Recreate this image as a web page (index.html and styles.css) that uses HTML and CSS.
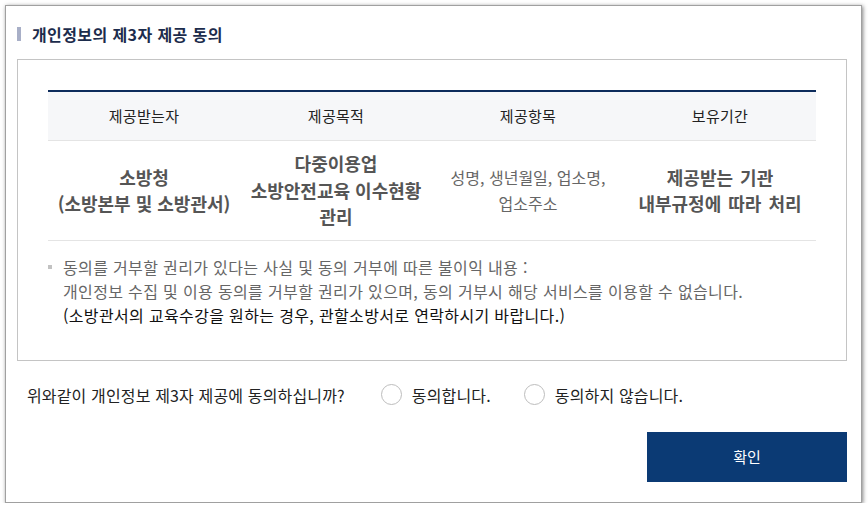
FILE: index.html
```html
<!DOCTYPE html>
<html lang="ko">
<head>
<meta charset="utf-8">
<title>개인정보의 제3자 제공 동의</title>
<link rel="stylesheet" href="styles.css">
</head>
<body>
<div class="dialog">
  <h2 class="title"><span class="title-bar"></span>개인정보의 제3자 제공 동의</h2>
  <div class="box">
    <table class="info">
      <thead>
        <tr>
          <th>제공받는자</th>
          <th>제공목적</th>
          <th>제공항목</th>
          <th>보유기간</th>
        </tr>
      </thead>
      <tbody>
        <tr>
          <td class="strong">소방청<br>(소방본부 및 소방관서)</td>
          <td class="strong">다중이용업<br>소방안전교육 이수현황<br>관리</td>
          <td class="items">성명, 생년월일, 업소명,<br>업소주소</td>
          <td class="strong wide">제공받는 기관<br>내부규정에 따라 처리</td>
        </tr>
      </tbody>
    </table>
    <div class="notes">
      <span class="bullet"></span>
      <p class="note-text">동의를 거부할 권리가 있다는 사실 및 동의 거부에 따른 불이익 내용 :<br>개인정보 수집 및 이용 동의를 거부할 권리가 있으며, 동의 거부시 해당 서비스를 이용할 수 없습니다.<br><span class="dark">(소방관서의 교육수강을 원하는 경우, 관할소방서로 연락하시기 바랍니다.)</span></p>
    </div>
  </div>
  <div class="question">
    <span class="q-text">위와같이 개인정보 제3자 제공에 동의하십니까?</span>
    <label class="option"><span class="radio"></span>동의합니다.</label>
    <label class="option"><span class="radio"></span>동의하지 않습니다.</label>
  </div>
  <div class="actions">
    <button class="confirm" type="button">확인</button>
  </div>
</div>
</body>
</html>
```
FILE: styles.css
```css
* { box-sizing: border-box; }
html, body { margin: 0; padding: 0; background: #ffffff; }
body {
  font-family: "Noto Sans CJK KR", "Noto Sans", sans-serif;
  color: #222;
}
.dialog {
  margin: 5px 0 0 5px;
  width: 857px;
  height: 498px;
  border: 1px solid #a0a0a0;
  box-shadow: 1px 1px 4px rgba(0, 0, 0, 0.5);
  padding: 18px 14px 0 11px;
  background: #fff;
}
.title {
  margin: 0 0 15px 0;
  height: 20px;
  display: flex;
  align-items: center;
  font-size: 16px;
  font-weight: bold;
  color: #1c2c4c;
  line-height: 20px;
  letter-spacing: 0.4px;
}
.title-bar {
  width: 4px;
  height: 14px;
  background: #a8afc7;
  margin-right: 11px;
}
.box {
  border: 1px solid #c4c4c4;
  padding: 30px 30px 33px 30px;
}
.info {
  width: 100%;
  border-collapse: collapse;
  table-layout: fixed;
  border-top: 2px solid #0d2c5c;
}
.info th {
  height: 49px;
  background: #f6f7f9;
  border-bottom: 1px solid #e4e4e4;
  font-weight: normal;
  font-size: 15px;
  letter-spacing: 0.3px;
  color: #222;
  text-align: center;
  padding: 0;
}
.info td {
  height: 100px;
  border-bottom: 1px solid #e4e4e4;
  text-align: center;
  padding: 0;
  line-height: 26.5px;
}
.info td.strong {
  font-weight: bold;
  font-size: 18px;
  color: #555;
}
.info td.wide { word-spacing: 2px; }
.info td.items {
  font-size: 16px;
  color: #666;
}
.notes {
  display: flex;
  align-items: flex-start;
  gap: 11px;
  margin-top: 14px;
}
.bullet {
  width: 4px;
  height: 4px;
  background: #c2c2c2;
  margin-top: 10px;
  flex: none;
}
.note-text {
  margin: 0;
  font-size: 16px;
  line-height: 24px;
  color: #666;
  letter-spacing: 0.35px;
}
.note-text .dark { color: #111; }
.question {
  display: flex;
  align-items: center;
  height: 24px;
  margin-top: 22px;
  padding-left: 10px;
  font-size: 16px;
  color: #222;
  letter-spacing: 0.15px;
}
.q-text { margin-right: 36px; }
.option {
  display: flex;
  align-items: center;
  gap: 10px;
  margin-right: 33px;
}
.radio {
  width: 21px;
  height: 21px;
  border: 1px solid #bdbdbd;
  border-radius: 50%;
  background: #fff;
}
.actions {
  display: flex;
  justify-content: flex-end;
  margin-top: 25px;
}
.confirm {
  width: 200px;
  height: 50px;
  border: none;
  background: #0b3a74;
  color: #fff;
  font-family: "Noto Sans CJK KR", "Noto Sans", sans-serif;
  font-size: 15px;
  padding: 0;
}
```
